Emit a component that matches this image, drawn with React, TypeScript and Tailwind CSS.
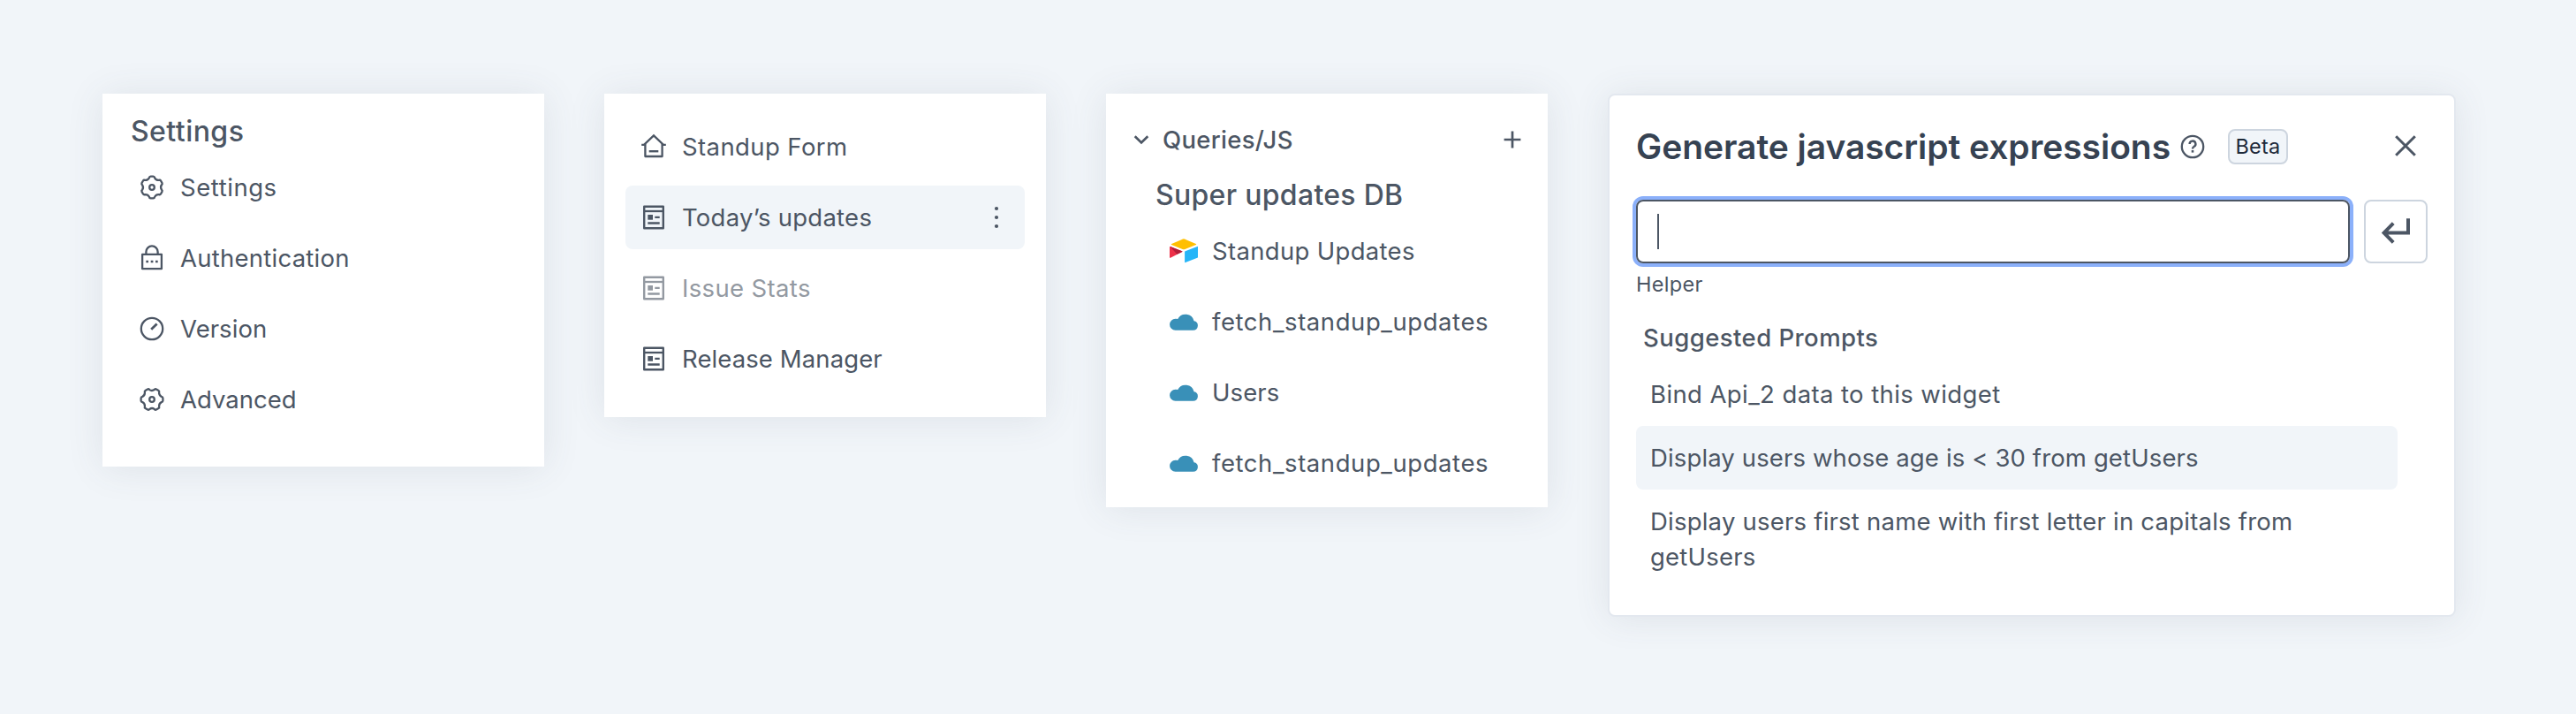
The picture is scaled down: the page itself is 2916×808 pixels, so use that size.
import type { ReactNode } from "react";

// Outline of a six-toothed gear centred in a 32×32 box, first tooth at `start` degrees.
function gearPath(start: number) {
  const teeth = [0, 60, 120, 180, 240, 300].map((step) => {
    const a = ((start + step) * Math.PI) / 180;
    const p = (x: number, y: number) =>
      `${(16 + x * Math.cos(a) - y * Math.sin(a)).toFixed(2)} ${(16 + x * Math.sin(a) + y * Math.cos(a)).toFixed(2)}`;
    return `${p(-3.1, -10.8)}Q${p(-2.8, -12.4)} ${p(-1.5, -12.4)}L${p(1.5, -12.4)}Q${p(2.8, -12.4)} ${p(3.1, -10.8)}Q${p(4.4, -8)} ${p(7.8, -8.1)}`;
  });
  return `M${teeth.join("L")}Z`;
}

const GEAR = gearPath(0);
const GEAR_TURNED = gearPath(30);

function Icon({ children }: { children: ReactNode }) {
  return (
    <svg
      viewBox="0 0 32 32"
      className="size-8 shrink-0"
      fill="none"
      stroke="currentColor"
      strokeWidth="2.3"
    >
      {children}
    </svg>
  );
}

const GearIcon = () => (
  <Icon>
    <path d={GEAR} strokeLinejoin="round" />
    <circle cx="16" cy="16" r="2.8" />
  </Icon>
);

const GearTurnedIcon = () => (
  <Icon>
    <path d={GEAR_TURNED} strokeLinejoin="round" />
    <circle cx="16" cy="16" r="2.8" />
  </Icon>
);

const LockIcon = () => (
  <Icon>
    <path d="M5.1 11.8H26.9V28.2H5.1Z" strokeLinejoin="round" />
    <path d="M9.4 11.5V9A6.6 6.6 0 0 1 22.6 9V11.5" />
    <path d="M9.3 20H12M14.7 20H17.4M20 20H22.7" strokeWidth="2.7" />
  </Icon>
);

const DialIcon = () => (
  <Icon>
    <circle cx="16" cy="16" r="12.2" />
    <path d="M15.2 16.8L21.6 10.6" strokeWidth="2.8" />
  </Icon>
);

const HomeIcon = () => (
  <Icon>
    <path d="M6.4 13V27H25.6V13" strokeLinejoin="round" />
    <path d="M2.2 13.8H5L16 3.4L27 13.8H29.8" />
    <path d="M10.7 21.2H21.3" strokeWidth="2.4" />
  </Icon>
);

const PageIcon = () => (
  <Icon>
    <path d="M5.2 3.8H26.8V28.2H5.2Z" strokeLinejoin="round" strokeWidth="2.4" />
    <path d="M5 9H27" />
    <path d="M9.3 13H15V18.7H9.3Z" fill="currentColor" stroke="none" />
    <path d="M17.3 15.9H22.7M9.3 22.5H22.7" />
  </Icon>
);

const AirtableIcon = () => (
  <svg viewBox="0 0 32 32" className="size-8 shrink-0">
    <path
      d="M15.2 2.5Q16 2.2 16.8 2.5L29.8 7.9Q30.8 8.5 29.8 9L16.9 14.2Q16 14.5 15.1 14.2L2.2 9Q1.2 8.5 2.2 7.9Z"
      fill="#ffbf00"
    />
    <path
      d="M17.1 17Q17.1 16.4 17.7 16.2L31.3 10.9Q32 10.7 32 11.4V23.1Q32 23.6 31.4 23.8L17.9 29.1Q17.1 29.3 17.1 28.6Z"
      fill="#26b5f8"
    />
    <path d="M0 11.5Q.1 10.6 1 11L14.1 16.2Q14.9 16.6 14.1 17L1 23.7Q0 24.1 0 23.2Z" fill="#ed3049" />
    <path d="M.5 11L14.1 16.2Q14.9 16.6 14.1 17L8.4 19.7Z" fill="#b31e3a" />
  </svg>
);

const CloudIcon = () => (
  <svg viewBox="0 0 32 32" className="size-8 shrink-0">
    <path
      d="M6.5 25.7A6.4 6.4 0 0 1 6.5 12.8Q7.9 12.7 9.2 13A9.9 9.9 0 0 1 27.6 15.2A5.3 5.3 0 0 1 26.6 25.7Z"
      fill="#3990b8"
    />
  </svg>
);

const HelpIcon = () => (
  <Icon>
    <circle cx="16" cy="16" r="12.2" />
    <path d="M12.6 13A3.4 3.4 0 1 1 17.5 16Q16 16.8 16 18.4" strokeWidth="2.4" />
    <path d="M14.7 21.3H17.3" strokeWidth="2.6" />
  </Icon>
);

function Panel({ className, children }: { className: string; children: ReactNode }) {
  return (
    <section
      className={`flex shrink-0 flex-col bg-white shadow-[0_2px_40px_rgba(76,86,100,0.11)] ${className}`}
    >
      {children}
    </section>
  );
}

function Item({
  icon,
  label,
  className = "",
  children,
}: {
  icon: ReactNode;
  label: string;
  className?: string;
  children?: ReactNode;
}) {
  return (
    <li className={`flex h-[72px] items-center gap-4 rounded-lg px-4 ${className}`}>
      {icon}
      <span className="whitespace-nowrap">{label}</span>
      {children}
    </li>
  );
}

export default function App() {
  return (
    <main className="flex h-[808px] w-[2916px] items-start gap-[68px] overflow-hidden bg-[#f1f5f9] pt-[106px] pl-[116px] font-['Inter',sans-serif] text-[27.5px] leading-10 text-[#4c5664]">
      <Panel className="h-[422px] w-[500px] px-6 pt-[22px]">
        <h2 className="h-12 pl-2 text-[32px] leading-[42px] font-medium tracking-[0.45px]">Settings</h2>
        <ul className="flex flex-col gap-2">
          <Item icon={<GearIcon />} label="Settings" className="tracking-[0.55px]" />
          <Item icon={<LockIcon />} label="Authentication" className="tracking-[0.25px]" />
          <Item icon={<DialIcon />} label="Version" className="tracking-[0.05px]" />
          <Item icon={<GearTurnedIcon />} label="Advanced" className="tracking-[0px]" />
        </ul>
      </Panel>

      <Panel className="h-[366px] w-[500px] p-6">
        <ul className="flex flex-col gap-2">
          <Item icon={<HomeIcon />} label="Standup Form" className="tracking-[0.4px]" />
          <Item icon={<PageIcon />} label="Today’s updates" className="bg-[#f1f5f9] tracking-[0.25px]">
            <svg viewBox="0 0 32 32" className="ml-auto size-8" fill="currentColor">
              <circle cx="16" cy="6" r="2.1" />
              <circle cx="16" cy="16" r="2.1" />
              <circle cx="16" cy="26" r="2.1" />
            </svg>
          </Item>
          <Item icon={<PageIcon />} label="Issue Stats" className="tracking-[0.35px] opacity-60" />
          <Item icon={<PageIcon />} label="Release Manager" className="tracking-[0.1px]" />
        </ul>
      </Panel>

      <Panel className="h-[468px] w-[500px] px-6 pt-8">
        <header className="flex h-10 items-center font-medium">
          <svg viewBox="0 0 32 32" className="size-8" fill="none" stroke="currentColor" strokeWidth="2.7">
            <path d="M8.7 12.2L16 19.4L23.3 12.2" />
          </svg>
          <h2 className="ml-2 tracking-[0.3px]">Queries/JS</h2>
          <svg viewBox="0 0 32 32" className="ml-auto size-8" fill="none" stroke="currentColor" strokeWidth="2.7">
            <path d="M16 6.6V25.4M6.6 16H25.4" />
          </svg>
        </header>
        <h3 className="h-[70px] pt-[22px] pl-8 text-[32px] leading-[42px] font-medium tracking-[0.3px]">
          Super updates DB
        </h3>
        <ul className="flex flex-col gap-2 pl-8">
          <Item icon={<AirtableIcon />} label="Standup Updates" className="tracking-[0.32px]" />
          <Item icon={<CloudIcon />} label="fetch_standup_updates" className="tracking-[0.57px]" />
          <Item icon={<CloudIcon />} label="Users" className="tracking-[0.1px]" />
          <Item icon={<CloudIcon />} label="fetch_standup_updates" className="tracking-[0.57px]" />
        </ul>
      </Panel>

      <Panel className="h-[592px] w-[960px] rounded-lg border-2 border-[#e3e8ef] px-[30px] pt-[34px]">
        <header className="flex h-12 items-center">
          <h2 className="w-[614px] text-[39px] leading-[48px] font-semibold tracking-[-0.05px] whitespace-nowrap text-[#364252]">
            Generate javascript expressions
          </h2>
          <HelpIcon />
          <span className="ml-6 flex h-10 w-[68px] items-center justify-center rounded-lg border-2 border-[#cdd5df] bg-[#f1f5f9] text-[23.5px] leading-9 tracking-[0.2px] text-[#1d2939]">
            Beta
          </span>
          <svg
            viewBox="0 0 32 32"
            className="mr-[9px] ml-auto size-8"
            fill="none"
            stroke="currentColor"
            strokeWidth="3"
          >
            <path d="M5.2 4.2L26.8 25.8M26.8 4.2L5.2 25.8" />
          </svg>
        </header>
        <div className="mt-9 flex gap-4">
          <div className="flex h-[72px] w-[808px] items-center rounded-lg border-2 border-[#4c5664] pl-[22px] ring-4 ring-[#8bb0fa]">
            <span className="h-10 w-0.5 bg-[#4c5664]" />
          </div>
          <button className="flex size-[72px] items-center justify-center rounded-lg border-2 border-[#cdd5df]">
            <svg viewBox="0 0 40 40" className="size-10" fill="none" stroke="currentColor" strokeWidth="4">
              <path d="M34 5.3V21.5H7M17.2 10.7L6.6 21.5L17.2 32.3" />
            </svg>
          </button>
        </div>
        <p className="mt-2 text-[23.5px] leading-8 tracking-[0.3px]">Helper</p>
        <h3 className="mt-6 h-12 pl-2 font-medium tracking-[0.45px]">Suggested Prompts</h3>
        <ul className="w-[862px]">
          <li className="p-4 tracking-[0.4px]">Bind Api_2 data to this widget</li>
          <li className="rounded-lg bg-[#f1f5f9] p-4 tracking-[0.13px]">
            Display users whose age is &lt; 30 from getUsers
          </li>
          <li className="p-4 tracking-[0.22px]">
            Display users first name with first letter in capitals from getUsers
          </li>
        </ul>
      </Panel>
    </main>
  );
}
